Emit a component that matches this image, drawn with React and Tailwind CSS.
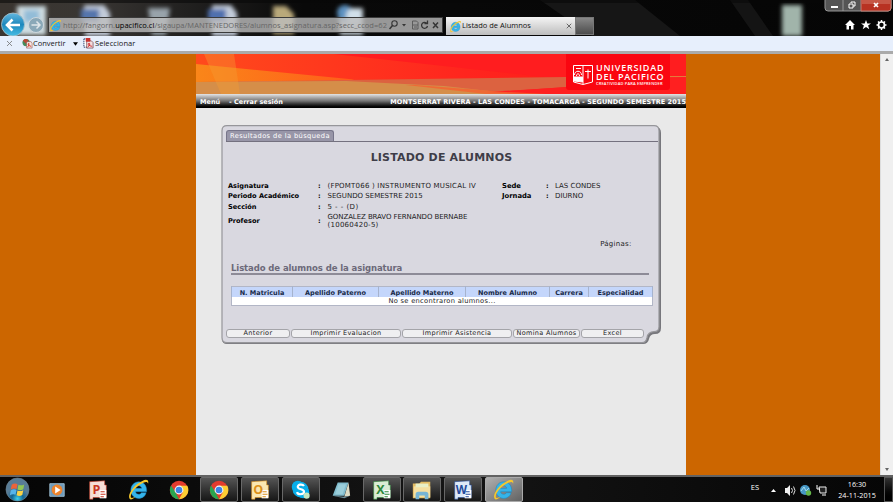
import React from "react";

const verdana = "font-['DejaVu_Sans',Verdana,sans-serif]";
const ui = "font-['Open_Sans','Noto_Sans',sans-serif]";

function IELogo({ className }) {
  return (
    <svg viewBox="0 0 24 24" className={className}>
      <path d="M20.500 14.300H9c.3 3 4.700 3.600 6 1h5c-1 3.800-3.900 6-7.800 6C7.500 21.300 4 17.500 4 12.700S7.500 4 12.200 4c5.300 0 8.700 3.700 8.300 10.300zM9 10.800h6.300c-.3-3.400-5.800-3.600-6.300 0z" fill="#35b4ea" stroke="#1683bd" strokeWidth=".5" />
      <path d="M3 22C-.5 18 7 7 16 3c4-2 7-1.500 6 3-.5-2-2-2.500-5-1C10 8 3 16 4 20c.5 1.500 3 .5 5-.8-2.500 2.500-5 4-6 2.800z" fill="#f5c72c" />
    </svg>
  );
}

function Chrome({ className }) {
  return (
    <svg viewBox="0 0 24 24" className={className}>
      <circle cx="12" cy="12" r="11" fill="#e33b2e" />
      <path d="M2.500 6.500 8 15l4 8A11 11 0 0 1 2.500 6.500z" fill="#2aa550" />
      <path d="M12 7h10a11 11 0 0 1-10 16l5-9z" fill="#fccd34" />
      <circle cx="12" cy="12" r="5.300" fill="#f5f7fa" />
      <circle cx="12" cy="12" r="4" fill="#3c82e4" />
    </svg>
  );
}

function Office({ letter, fg, bg, size = 15, className }) {
  return (
    <svg viewBox="0 0 24 24" className={className}>
      <path d="M2 2 20 1v5h2v15H6v2H2z" fill={bg} stroke={fg} strokeWidth=".7" />
      <path d="M14 12h8v10h-8z" fill="#fff" />
      <path d="M15 14h5M15 17h6M15 20h4" stroke={fg} strokeWidth="1.300" />
      <text x="10" y="16.500" textAnchor="middle" fontSize={size} fontWeight="bold" fontFamily="Open Sans, sans-serif" fill={fg}>{letter}</text>
    </svg>
  );
}

function DesktopGlow() {
  return (
    <svg className="absolute inset-0 h-full w-full" viewBox="0 0 893 36" preserveAspectRatio="none">
      <defs>
        <filter id="glow" x="-5%" y="-20%" width="110%" height="140%"><feGaussianBlur stdDeviation="2" /></filter>
        <linearGradient id="frame" x2="1">
          <stop stopColor="#3a3530" />
          <stop offset=".1" stopColor="#393633" />
          <stop offset=".2" stopColor="#232221" />
          <stop offset=".34" stopColor="#090909" />
          <stop offset="1" stopColor="#050505" />
        </linearGradient>
      </defs>
      <path fill="url(#frame)" d="M0 0h893v36H0z" />
      <path d="M540 0h95l45 36H592z" fill="#161616" />
      <path d="M730 0h18l25 36h-18z" fill="#141414" />
      <g filter="url(#glow)">
        <path d="M17 6h29v29H17z" fill="#cfdde2" />
        <path d="M24 10h15v12H24z" fill="#92bcd8" />
        <path d="M84 5h20l6 8v23H85z" fill="#c3ccda" />
        <path d="M81 9h18v13H81z" fill="#5474ac" />
        <path d="M148 8h22l-4 27h-14z" fill="#98a3aa" />
        <path d="M212 5h19l6 8v23h-25z" fill="#c3ccda" />
        <path d="M208 9h18v13h-18z" fill="#506fae" />
        <path d="M273 6h13l8 8v20h-21z" fill="#b9a97a" />
        <path d="M338 8h25v27h-23z" fill="#c0cad2" />
        <circle cx="345" cy="13" r="8" fill="#5b91c0" />
        <circle cx="354" cy="16" r="8" fill="#d0dfe9" />
        <path d="M782 5h20v31h-20z" fill="#a1b4aa" />
      </g>
      <path d="M0 0h893v3H0z" fill="#080808" opacity=".55" />
    </svg>
  );
}

function BrowserFrame() {
  return (
    <header className={`relative flex h-9 shrink-0 items-start overflow-hidden bg-black ${ui}`}>
      <DesktopGlow />
      <svg viewBox="0 0 48 36" className="relative h-9 w-12 shrink-0">
        <defs>
          <linearGradient id="back" y2="1" x2="0"><stop stopColor="#62b7df" /><stop offset=".5" stopColor="#1d88bd" /><stop offset="1" stopColor="#45bce4" /></linearGradient>
        </defs>
        <circle cx="13" cy="24.500" r="11.500" fill="url(#back)" stroke="#b0c4cc" strokeWidth=".8" />
        <path d="M20 25H8M12.500 19.500 7 25l5.500 5.500" fill="none" stroke="#fff" strokeWidth="2.600" />
        <circle cx="36" cy="25" r="7.500" fill="#8aa8b8" stroke="#ced7dd" strokeWidth="1" />
        <path d="M31.500 25h8M36.500 21.500l3.500 3.500-3.500 3.500" fill="none" stroke="#dfe6ea" strokeWidth="1.500" />
      </svg>
      <div className="relative mt-[17px] flex h-[16px] w-[395px] shrink-0 items-center border border-[#3b3b3b] bg-[#bdbdbd]/80">
        <IELogo className="h-[13px] w-[13px] shrink-0" />
        <span className="ml-[1px] w-[326px] shrink-0 whitespace-nowrap text-[7.500px] leading-[14px] tracking-[0.040px] text-[#666]">
          http://fangorn.<span className="text-black">upacifico.cl</span>/sigaupa/MANTENEDORES/alumnos_asignatura.asp?secc_ccod=62
        </span>
        <svg viewBox="0 0 52 14" className="h-[14px] w-[52px] shrink-0" fill="none" stroke="#353535" strokeWidth="1.100">
          <circle cx="5.500" cy="5.500" r="2.700" /><path d="m3.500 7.500-3 3.500" strokeWidth="1.500" />
          <path d="m13 6 2 2.500L17 6z" fill="#353535" stroke="none" />
          <path d="M23.500 3h4l1.500 1.500V11h-5.500zM24 7h5M25 9h3" stroke="#555" strokeWidth=".9" />
          <path d="M38 5.500A3 3 0 1 0 38.500 8M35.500 5.500h3V2.500" strokeWidth="1.300" />
          <path d="m44 4.500 5 5.500m0-5.500L44 10" strokeWidth="1.500" />
        </svg>
      </div>
      <div className="relative ml-[3px] mt-[17px] flex h-[18px] w-[129px] shrink-0 items-center bg-linear-to-b from-[#f5f5f5] to-[#bdbdbd] pl-[3px]">
        <IELogo className="h-[13px] w-[13px]" />
        <span className="whitespace-nowrap text-[7.500px] text-[#111]">Listado de Alumnos</span>
        <svg viewBox="0 0 8 8" className="ml-auto mr-[3px] h-[6px] w-[6px]" stroke="#666" strokeWidth="1.300"><path d="m1 1 6 6m0-6L1 7" /></svg>
      </div>
      <div className="relative mt-[17px] h-[18px] w-[19px] border border-[#777] bg-linear-to-b from-[#888] to-[#4d4d4d]" />
      <div className="relative ml-auto flex flex-col items-end">
        <svg viewBox="0 0 70 12" className="h-3 w-[70px]">
          <path d="M2-2h66v10q0 3-3 3H5q-3 0-3-3z" fill="#555" stroke="#989898" />
          <path d="M38-2h30v10q0 3-3 3H38z" fill="#b83222" stroke="#c18177" />
          <path d="M39 0h28v4H39z" fill="#ce6b5a" opacity=".65" />
          <path d="M20 0v11" stroke="#999" />
          <path d="M8 7h7" stroke="#fff" strokeWidth="2" />
          <path d="M26 4h4v4h-4zM28 3V2h4v4h-2" stroke="#fff" fill="none" />
          <path d="m51 3 4 4m0-4-4 4" stroke="#fff" strokeWidth="1.700" />
        </svg>
        <svg viewBox="0 0 48 24" className="h-6 w-12" fill="#fff">
          <path d="m5 8-5 5h1.500v4.500H4V14h2v3.500h2.500V13H10z" />
          <path d="m21 8 1.300 3.400h3.700l-2.900 2.100 1.200 3.800-3.300-2.200-3.300 2.200 1.200-3.800-2.900-2.100h3.700z" />
          <circle cx="36.500" cy="13" r="3" fill="none" stroke="#fff" strokeWidth="1.700" />
          <path d="M36.500 8v2m0 6v2M31.500 13h2m6 0h2m-8.500-3.500 1.300 1.300m4.400 4.400 1.300 1.300m0-7-1.300 1.300m-4.400 4.400-1.300 1.300" stroke="#fff" strokeWidth="1.500" />
        </svg>
      </div>
    </header>
  );
}

function Toolbar() {
  return (
    <div className={`flex h-[18px] shrink-0 items-center border-b-[3px] border-[#aaa] bg-[#e7effc] text-[7.500px] text-[#151515] ${ui}`}>
      <svg viewBox="0 0 6 6" className="ml-[7px] h-[5px] w-[5px]" stroke="#777"><path d="m0 0 6 6m0-6L0 6" /></svg>
      <svg viewBox="0 0 12 12" className="ml-[10px] h-[11px] w-[11px]">
        <circle cx="4.500" cy="5" r="4" fill="#438b5b" /><path d="M1 3c2-3 5-2 6 0L4 6z" fill="#bb4735" />
        <path d="M5 4h5l1 2v5H5z" fill="#f5e6e3" stroke="#8d4540" strokeWidth=".6" /><path d="M6 10c2-2 2-5 1-4s1 3 3 3" stroke="#cf2d20" fill="none" />
      </svg>
      <span className="w-[38px]">Convertir</span>
      <svg viewBox="0 0 6 4" className="ml-[2px] h-[4px] w-[5px]"><path d="M0 0h6L3 4z" /></svg>
      <svg viewBox="0 0 12 12" className="ml-[5px] h-[11px] w-[11px]">
        <path d="M1 1h6v9H1z" fill="#fff" stroke="#1c3768" strokeDasharray="1.500 .7" /><path d="M4 3h5l2 2v6H4z" fill="#f3dddd" stroke="#65343b" strokeWidth=".7" /><path d="M3 0h5v4H3z" fill="#c83230" /><path d="M5 10c3-2 3-5 1-4s2 3 4 3" stroke="#cd1b20" fill="none" />
      </svg>
      <span className="ml-[1px] tracking-[0.050px]">Seleccionar</span>
    </div>
  );
}

function Banner() {
  return (
    <div className="relative h-10 bg-[#ff2420]">
      <svg viewBox="0 0 490 40" className="block h-10 w-[490px]">
        <defs>
          <linearGradient id="sweep" x2="1"><stop stopColor="#ff4a1c" /><stop offset=".55" stopColor="#ff251e" /><stop offset="1" stopColor="#ff1616" /></linearGradient>
          <linearGradient id="gold" x2="1"><stop stopColor="#fa8619" /><stop offset="1" stopColor="#ff5d1a" /></linearGradient>
        </defs>
        <path d="M0 0h490v40H0z" fill="url(#sweep)" />
        <path d="m138 0 210 23H490V0z" fill="#ff1d1f" />
        <path d="m0 10 158 15.500-8 2L0 29z" fill="url(#gold)" />
        <path d="m150 26 220-3 120-1v1.500l-120 9.500-56 4 6 3H0V28z" fill="#dc6240" />
        <path d="m0 28 150-1 98 5 72 8H0z" fill="#d58e49" />
        <path d="m374 24 116-1v17H320l-30-2 84-5z" fill="#ff2020" />
        <path d="m220 31 90 7 40 2h-60l-80-9z" fill="#f4622f" opacity=".8" />
        <path d="M474 22h16v1h-16z" fill="#e57a3a" />
        <path d="M8 0h30l6 40H25z" fill="#f59c33" opacity=".4" />
        <path d="M370 0h104v33q0 3-3 3h-98q-3 0-3-3z" fill="#fa0610" />
        <g stroke="#fff" fill="none" strokeWidth="1">
          <path d="M377.500 11.500h19V28l-9.500 2.500-9.500-2.500z" />
          <path d="M387 12v18M389 17.500h6M392 15.500v9" />
          <path d="M378 23h8.500v5L378 27z" fill="#fff" />
          <path d="M378.500 21c0-5 7-5 7 0M380.500 22c0-3 3-3 3 0M380 14.500h5" />
        </g>
      </svg>
      <div className="absolute left-[400px] top-[10px] font-['Open_Sans',sans-serif] font-semibold text-white">
        <div className="h-[8.500px] whitespace-nowrap text-[9px] leading-[8.500px] tracking-[0.780px]">UNIVERSIDAD</div>
        <div className="h-[8.500px] whitespace-nowrap text-[9px] leading-[8.500px] tracking-[0.780px]">DEL PACIFICO</div>
        <div className="whitespace-nowrap text-[4px] leading-[5px] tracking-[0.180px]">CREATIVIDAD PARA EMPRENDER</div>
      </div>
    </div>
  );
}

function Field({ label, children, className = "" }) {
  return (
    <div className={`flex items-center ${className}`}>
      <span className="w-[90px] text-[6.600px] font-bold text-black">{label}</span>
      <span className="w-[9.500px] font-bold text-black">:</span>
      <span className="whitespace-nowrap text-[7px]">{children}</span>
    </div>
  );
}

function ShortField({ label, value }) {
  return (
    <div className="flex h-[10.500px] items-center">
      <span className="w-[44px] text-[6.800px] font-bold text-black">{label}</span>
      <span className="w-[9px] font-bold text-black">:</span>
      <span className="whitespace-nowrap text-[7px]">{value}</span>
    </div>
  );
}

function Button({ className, children }) {
  return <button className={`h-[9px] shrink-0 whitespace-nowrap rounded-[3px] border border-[#a4a4a9] bg-[#efeff1] p-0 text-center text-[6.500px] leading-[7px] tracking-[0.320px] text-[#222] ${className}`}>{children}</button>;
}

const columns = [
  ["N. Matricula", "w-[61px]"],
  ["Apellido Paterno", "w-[86px]"],
  ["Apellido Materno", "w-[87px]"],
  ["Nombre Alumno", "w-[84px]"],
  ["Carrera", "w-[39px]"],
  ["Especialidad", "w-[64px]"],
];

function Panel() {
  return (
    <section className="relative ml-[25px] mt-[17px] h-[220px] w-[441px] text-[6.500px] leading-[8px] text-[#222]">
      <svg viewBox="0 0 441 220" className="absolute inset-0 h-full w-full">
        <path d="M6 2h429q5 0 5 6v195q0 6-6 6-5 0-6 5-1 5-6 5H6q-5 0-5-5V7q0-5 5-5z" fill="#77777c" />
        <path d="M6 .7h427q5 0 5 5v196q0 5-5 5-6 0-7 6-1 5-5 5H6q-5 0-5-5V5.700q0-5 5-5z" fill="#d9d8e0" stroke="#96969a" strokeWidth="1.200" />
      </svg>
      <div className="relative flex h-full flex-col">
        <div className="ml-[5px] mr-[4px] mt-[5px] flex h-[12px] border-b border-[#74717f]">
          <div className="h-[11px] w-[108px] whitespace-nowrap rounded-t-[3px] border border-b-0 border-[#77758a] bg-[#9896a8] pl-[3px] text-[6.700px] leading-[11px] tracking-[0.390px] text-white">Resultados de la búsqueda</div>
        </div>
        <h1 className="mt-[10px] whitespace-nowrap text-center text-[11px] font-bold leading-[12px] tracking-[0.180px] text-[#3e3d48]">LISTADO DE ALUMNOS</h1>
        <div className="mt-[16.500px] flex pl-[7px]">
          <div className="w-[274px]">
            <Field label="Asignatura" className="h-[10.500px]"><span className="tracking-[0.210px]">(FPOMT066 ) INSTRUMENTO MUSICAL IV</span></Field>
            <Field label="Periodo Académico" className="h-[10.500px]">SEGUNDO SEMESTRE 2015</Field>
            <Field label="Sección" className="h-[10.500px]"><span className="tracking-[0.450px]">5 - - (D)</span></Field>
            <Field label="Profesor" className="h-[18px]"><span className="tracking-[-0.080px]">GONZALEZ BRAVO FERNANDO BERNABE</span><br /><span className="tracking-[0.250px]">(10060420-5)</span></Field>
          </div>
          <div>
            <ShortField label="Sede" value="LAS CONDES" />
            <ShortField label="Jornada" value="DIURNO" />
          </div>
        </div>
        <div className="mr-[30.500px] mt-[10px] text-right text-[7px] tracking-[0.250px]">Páginas:</div>
        <h2 className="ml-[10px] mr-[13px] mt-[13.500px] h-[13.500px] border-b-2 border-[#8d8b97] text-[8.500px] font-bold leading-[12px] tracking-[-0.090px] text-[#6c6979]">Listado de alumnos de la asignatura</h2>
        <table className="ml-[10px] mt-[10.500px] w-[421px] table-fixed border-collapse border border-[#b2b6c6]">
          <thead>
            <tr className="h-[11px] bg-[#c4d6fb]">
              {columns.map(([name, width]) => (
                <th key={name} className={`${width} whitespace-nowrap border-x border-[#a6b3cd] p-0 pt-[2px] text-center text-[6.500px] font-bold leading-[8px] text-[#182a48]`}>{name}</th>
              ))}
            </tr>
          </thead>
          <tbody><tr className="h-[8px] bg-white"><td colSpan={6} className="p-0 pt-[1px] text-center text-[6.700px] leading-[7px] tracking-[0.300px]">No se encontraron alumnos...</td></tr></tbody>
        </table>
        <div className="ml-[5px] mt-[23px] flex gap-[1px]">
          <Button className="w-[64px]">Anterior</Button>
          <Button className="w-[110px]">Imprimir Evaluacion</Button>
          <Button className="w-[110px]">Imprimir Asistencia</Button>
          <Button className="w-[67px]">Nomina Alumnos</Button>
          <Button className="w-[63px]">Excel</Button>
        </div>
      </div>
    </section>
  );
}

function Page() {
  return (
    <main className="flex min-h-0 flex-1 bg-[#cc6600]">
      <div className={`ml-[196px] w-[490px] overflow-hidden bg-[#e9e9e9] ${verdana}`}>
        <Banner />
        <nav className="flex h-[14px] items-end bg-linear-to-b from-[#e5e5e5] via-[#737373] to-black pb-[1px] pl-[4px] text-[6.500px] font-bold leading-[10px] text-white">
          <span className="w-[29px]">Menú</span><span className="whitespace-nowrap">- Cerrar sesión</span>
          <span className="ml-auto whitespace-nowrap tracking-[0.070px]">MONTSERRAT RIVERA - LAS CONDES - TOMACARGA - SEGUNDO SEMESTRE 2015</span>
        </nav>
        <Panel />
      </div>
      <div className="ml-auto flex w-[13px] flex-col justify-between border-l border-[#ddd] bg-[#f0f0f0]">
        <svg viewBox="0 0 12 12" className="h-3 w-3"><path d="m4 7 2-3 2 3z" fill="#666" /></svg>
        <svg viewBox="0 0 12 12" className="h-3 w-3"><path d="m4 5 2 3 2-3z" fill="#666" /></svg>
      </div>
    </main>
  );
}

function Task({ active, current, children }) {
  const state = current ? "border-[#aaa] bg-linear-to-br from-[#b0b0b0] to-[#626262]" : active ? "border-[#686868] bg-linear-to-b from-[#555] to-[#161616]" : "border-transparent";
  return <div className={`flex h-[25px] w-[38px] shrink-0 items-center justify-center rounded-[2px] border ${state}`}>{children}</div>;
}

function Taskbar() {
  return (
    <footer className={`flex h-[27px] shrink-0 items-center border-t-2 border-[#626262] bg-linear-to-r from-[#050505] via-[#151515] to-[#060606] text-white ${ui}`}>
      <svg viewBox="0 0 26 26" className="ml-[5px] h-[25px] w-[25px]">
        <defs><radialGradient id="orb" cy=".9"><stop stopColor="#40d3ed" /><stop offset=".5" stopColor="#126594" /><stop offset="1" stopColor="#587c96" /></radialGradient></defs>
        <circle cx="13" cy="13" r="12" fill="url(#orb)" stroke="#71858f" strokeWidth=".6" />
        <path d="M7 8q3-2 6-.5l-1 5Q9 11 6 13z" fill="#ed6339" /><path d="M14 8q3 1.500 6-.3l-1 5q-3 1.800-6 .3z" fill="#91c855" /><path d="M6 14q3-2 6-.5l-1 5Q8 17 5 19z" fill="#56b4ea" /><path d="M13 14q3 1.500 6-.3l-1 5q-3 1.800-6 .3z" fill="#f9d347" />
      </svg>
      <div className="ml-[8px] flex gap-[2.600px]">
        <Task><svg viewBox="0 0 20 20" className="h-[18px] w-[18px]"><path d="M2 3h16v14H2z" fill="#6d9abb" stroke="#9ebed1" /><circle cx="10" cy="10" r="6" fill="#ee832b" /><path d="m8 6 6 4-6 4z" fill="#fff" /></svg></Task>
        <Task><Office letter="P" fg="#c93722" bg="#f6ded6" className="h-[20px] w-[20px]" /></Task>
        <Task><IELogo className="h-[23px] w-[23px]" /></Task>
        <Task><Chrome className="h-[20px] w-[20px]" /></Task>
        <Task active><Chrome className="h-[20px] w-[20px]" /></Task>
        <Task active><Office letter="O" fg="#dc911a" bg="#fae8b2" className="h-[20px] w-[20px]" /></Task>
        <Task active><svg viewBox="0 0 24 24" className="h-[21px] w-[21px]"><circle cx="9" cy="9" r="7" fill="#08aee9" /><circle cx="15" cy="15" r="7" fill="#08aee9" /><circle cx="12" cy="12" r="9" fill="#08aee9" /><path d="M16 8c-2-3-8-1.500-7 1.500s7 1.500 7 5-7 4-8 .5" fill="none" stroke="#fff" strokeWidth="2.500" /><circle cx="19" cy="19" r="3.500" fill="#c4e6c0" /></svg></Task>
        <Task><svg viewBox="0 0 24 24" className="h-[20px] w-[20px]"><path d="M8 3h13l-5 16H2z" fill="#82bdce" /><path d="m21 3 2 16-7 1z" fill="#dedbc3" /><path d="m2 19 14 1 7-1-7 3z" fill="#70919b" /><path d="M9 5h9l-4 12H5z" fill="#abd9e3" opacity=".6" /></svg></Task>
        <Task active><Office letter="X" fg="#2e883b" bg="#daedd4" className="h-[20px] w-[20px]" /></Task>
        <Task active><svg viewBox="0 0 24 24" className="h-[22px] w-[22px]"><path d="M2 5h7l2-2h10v18H2z" fill="#e3bb62" /><path d="M3 8h18v12H3z" fill="#f5dfa0" /><path d="M5 5h14v4H5z" fill="#e8efc7" /><path d="M5 22v-5q0-3 3-3h8q3 0 3 3v5h-4v-4H9v4z" fill="#77b5d4" /></svg></Task>
        <Task active><Office letter="W" fg="#244b9b" bg="#dde9f8" className="h-[20px] w-[20px]" size={14} /></Task>
        <Task current><IELogo className="h-[23px] w-[23px]" /></Task>
      </div>
      <span className="ml-auto mr-[12px] -mt-1 text-[7.500px]">ES</span>
      <svg viewBox="0 0 58 16" className="h-4 w-[58px]">
        <path d="m0 10 2.500-3L5 10z" fill="#fff" />
        <path d="M14 6h2l3-3v11l-3-3h-2z" fill="#eee" /><path d="M20.500 6q2 2.500 0 5M22.500 4.500q3 4 0 8" fill="none" stroke="#ddd" />
        <circle cx="34" cy="8" r="5" fill="#4798c6" /><path d="m30 9 3-4 2 4 3-3" stroke="#a8dbea" fill="none" /><circle cx="37.500" cy="11" r="2.700" fill="#65b84a" />
        <path d="M48 5h7v6h-6z" fill="#222" stroke="#eee" /><path d="M46 3v4h3M51 13h4" stroke="#fff" fill="none" />
      </svg>
      <div className="ml-[7px] w-[42px] whitespace-nowrap text-center text-[7.200px] leading-[11px]"><div>16:30</div><div>24-11-2015</div></div>
      <div className="ml-[6px] h-[25px] w-[9px] border border-[#555] bg-linear-to-b from-[#333] to-black" />
    </footer>
  );
}

export default function App() {
  return (
    <div className="flex h-[502px] w-[893px] flex-col overflow-hidden bg-black">
      <BrowserFrame />
      <Toolbar />
      <Page />
      <Taskbar />
    </div>
  );
}
